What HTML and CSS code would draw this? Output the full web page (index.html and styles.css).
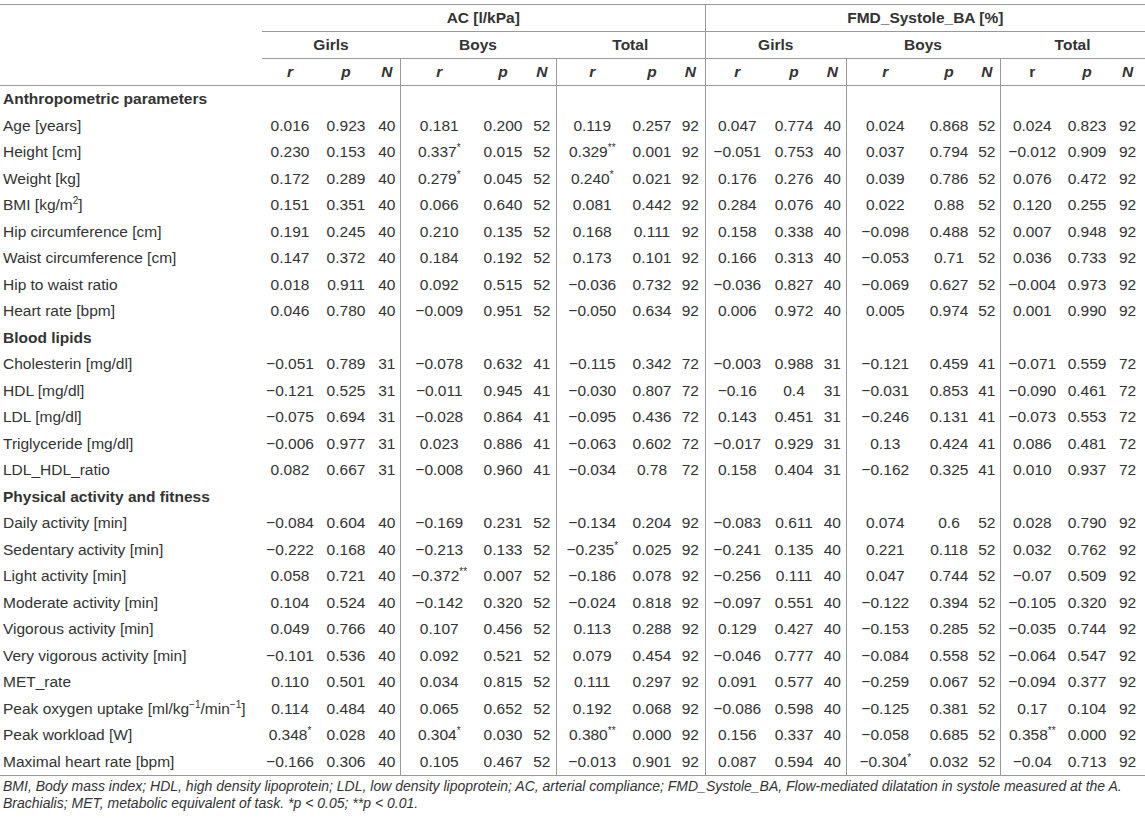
FILE: index.html
```html
<!DOCTYPE html>
<html lang="en">
  <head>
    <meta charset="utf-8">
    <title>AC and FMD correlations</title>
    <link rel="stylesheet" href="styles.css">
  </head>
  <body>
    <table class="stats">
      <colgroup>
        <col class="w262">
        <col class="w56"><col class="w56"><col class="w26">
        <col class="w78"><col class="w50"><col class="w28">
        <col class="w72"><col class="w48"><col class="w29">
        <col class="w64"><col class="w50"><col class="w27">
        <col class="w78"><col class="w50"><col class="w26">
        <col class="w64"><col class="w46"><col class="w35">
      </colgroup>
      <thead>
        <tr class="top">
          <th></th>
          <th colspan="9" class="under">AC [l/kPa]</th>
          <th colspan="9" class="under gs">FMD_Systole_BA [%]</th>
        </tr>
        <tr>
          <th></th>
          <th colspan="3" class="under">Girls</th>
          <th colspan="3" class="under">Boys</th>
          <th colspan="3" class="under">Total</th>
          <th colspan="3" class="under gs">Girls</th>
          <th colspan="3" class="under">Boys</th>
          <th colspan="3" class="under">Total</th>
        </tr>
        <tr class="vars">
          <th></th>
          <th><i>r</i></th><th><i>p</i></th><th><i>N</i></th>
          <th class="gs"><i>r</i></th><th><i>p</i></th><th><i>N</i></th>
          <th class="gs"><i>r</i></th><th><i>p</i></th><th><i>N</i></th>
          <th class="gs"><i>r</i></th><th><i>p</i></th><th><i>N</i></th>
          <th class="gs"><i>r</i></th><th><i>p</i></th><th><i>N</i></th>
          <th class="gs">r</th><th><i>p</i></th><th><i>N</i></th>
        </tr>
      </thead>
      <tbody id="rows"></tbody>
    </table>
    <p class="note">BMI, Body mass index; HDL, high density lipoprotein; LDL, low density lipoprotein; AC, arterial compliance; FMD_Systole_BA, Flow-mediated dilatation in systole measured at the A.<br>Brachialis; MET, metabolic equivalent of task. *<i>p</i> &lt; 0.05; **<i>p</i> &lt; 0.01.</p>
    <script>
        const rows=[
            ["#Anthropometric parameters"],
            ["Age [years]","0.016 0.923 40 0.181 0.200 52 0.119 0.257 92 0.047 0.774 40 0.024 0.868 52 0.024 0.823 92"],
            ["Height [cm]","0.230 0.153 40 0.337* 0.015 52 0.329** 0.001 92 -0.051 0.753 40 0.037 0.794 52 -0.012 0.909 92"],
            ["Weight [kg]","0.172 0.289 40 0.279* 0.045 52 0.240* 0.021 92 0.176 0.276 40 0.039 0.786 52 0.076 0.472 92"],
            ["BMI [kg/m<sup>2</sup>]","0.151 0.351 40 0.066 0.640 52 0.081 0.442 92 0.284 0.076 40 0.022 0.88 52 0.120 0.255 92"],
            ["Hip circumference [cm]","0.191 0.245 40 0.210 0.135 52 0.168 0.111 92 0.158 0.338 40 -0.098 0.488 52 0.007 0.948 92"],
            ["Waist circumference [cm]","0.147 0.372 40 0.184 0.192 52 0.173 0.101 92 0.166 0.313 40 -0.053 0.71 52 0.036 0.733 92"],
            ["Hip to waist ratio","0.018 0.911 40 0.092 0.515 52 -0.036 0.732 92 -0.036 0.827 40 -0.069 0.627 52 -0.004 0.973 92"],
            ["Heart rate [bpm]","0.046 0.780 40 -0.009 0.951 52 -0.050 0.634 92 0.006 0.972 40 0.005 0.974 52 0.001 0.990 92"],
            ["#Blood lipids"],
            ["Cholesterin [mg/dl]","-0.051 0.789 31 -0.078 0.632 41 -0.115 0.342 72 -0.003 0.988 31 -0.121 0.459 41 -0.071 0.559 72"],
            ["HDL [mg/dl]","-0.121 0.525 31 -0.011 0.945 41 -0.030 0.807 72 -0.16 0.4 31 -0.031 0.853 41 -0.090 0.461 72"],
            ["LDL [mg/dl]","-0.075 0.694 31 -0.028 0.864 41 -0.095 0.436 72 0.143 0.451 31 -0.246 0.131 41 -0.073 0.553 72"],
            ["Triglyceride [mg/dl]","-0.006 0.977 31 0.023 0.886 41 -0.063 0.602 72 -0.017 0.929 31 0.13 0.424 41 0.086 0.481 72"],
            ["LDL_HDL_ratio","0.082 0.667 31 -0.008 0.960 41 -0.034 0.78 72 0.158 0.404 31 -0.162 0.325 41 0.010 0.937 72"],
            ["#Physical activity and fitness"],
            ["Daily activity [min]","-0.084 0.604 40 -0.169 0.231 52 -0.134 0.204 92 -0.083 0.611 40 0.074 0.6 52 0.028 0.790 92"],
            ["Sedentary activity [min]","-0.222 0.168 40 -0.213 0.133 52 -0.235* 0.025 92 -0.241 0.135 40 0.221 0.118 52 0.032 0.762 92"],
            ["Light activity [min]","0.058 0.721 40 -0.372** 0.007 52 -0.186 0.078 92 -0.256 0.111 40 0.047 0.744 52 -0.07 0.509 92"],
            ["Moderate activity [min]","0.104 0.524 40 -0.142 0.320 52 -0.024 0.818 92 -0.097 0.551 40 -0.122 0.394 52 -0.105 0.320 92"],
            ["Vigorous activity [min]","0.049 0.766 40 0.107 0.456 52 0.113 0.288 92 0.129 0.427 40 -0.153 0.285 52 -0.035 0.744 92"],
            ["Very vigorous activity [min]","-0.101 0.536 40 0.092 0.521 52 0.079 0.454 92 -0.046 0.777 40 -0.084 0.558 52 -0.064 0.547 92"],
            ["MET_rate","0.110 0.501 40 0.034 0.815 52 0.111 0.297 92 0.091 0.577 40 -0.259 0.067 52 -0.094 0.377 92"],
            ["Peak oxygen uptake [ml/kg<sup>&minus;1</sup>/min<sup>&minus;1</sup>]","0.114 0.484 40 0.065 0.652 52 0.192 0.068 92 -0.086 0.598 40 -0.125 0.381 52 0.17 0.104 92"],
            ["Peak workload [W]","0.348* 0.028 40 0.304* 0.030 52 0.380** 0.000 92 0.156 0.337 40 -0.058 0.685 52 0.358** 0.000 92"],
            ["Maximal heart rate [bpm]","-0.166 0.306 40 0.105 0.467 52 -0.013 0.901 92 0.087 0.594 40 -0.304* 0.032 52 -0.04 0.713 92"]
        ];
        const fmt=(v)=>{
            let stars=v.match(/\*+$/);
            let num=v.replace(/\*+$/,"").replace("-","\u2212");
            return stars ? num+"<sup>"+stars[0]+"</sup>" : num;
        };
        let html="";
        for(let row of rows){
            let section=row[0].startsWith("#");
            let vals=section ? Array(18).fill("") : row[1].split(" ");
            html+=section ? '<tr class="section">' : "<tr>";
            html+='<td class="label">'+(section ? row[0].slice(1) : row[0])+"</td>";
            vals.forEach((v,i)=>{
                html+=(i%3==0 && i>0) ? '<td class="gs">' : "<td>";
                html+=fmt(v)+"</td>";
            });
            html+="</tr>";
        }
        document.querySelector("#rows").innerHTML=html;
    </script>
  </body>
</html>
```

FILE: styles.css
```css
*{
    margin: 0;
    padding: 0;
}
body{
    background: #fff;
    color: #333;
    font-family: "Liberation Sans", Arial, sans-serif;
    padding-top: 4px;
}
.stats{
    width: 1145px;
    border-collapse: collapse;
    table-layout: fixed;
    font-size: 15.5px;
}
.stats th,
.stats td{
    padding: 0;
    text-align: center;
    white-space: nowrap;
    vertical-align: middle;
}
.stats th{
    height: 26px;
    font-weight: bold;
}
.stats td{
    height: 26.5px;
}
.stats .top{
    border-top: 1px solid #999;
}
.stats .under{
    border-bottom: 1px solid #999;
}
.stats .vars th{
    border-bottom: 1px solid #999;
}
.stats .gs{
    border-left: 1px solid #999;
}
.stats tbody tr:last-child td{
    border-bottom: 1px solid #999;
}
.stats .label{
    text-align: left;
    padding-left: 3px;
}
.section .label{
    font-weight: bold;
}
sup{
    font-size: 10px;
    line-height: 0;
}
.note{
    font-size: 14px;
    font-style: italic;
    line-height: 17px;
    margin-top: 2px;
    padding-left: 3px;
    white-space: nowrap;
}
.w262{width: 262px;}
.w78{width: 78px;}
.w72{width: 72px;}
.w64{width: 64px;}
.w56{width: 56px;}
.w50{width: 50px;}
.w48{width: 48px;}
.w46{width: 46px;}
.w35{width: 35px;}
.w29{width: 29px;}
.w28{width: 28px;}
.w27{width: 27px;}
.w26{width: 26px;}
```
